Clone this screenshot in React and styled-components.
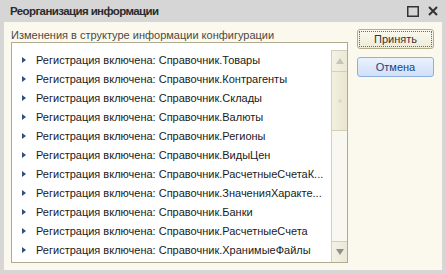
import React from 'react'
import styled, { createGlobalStyle } from 'styled-components'

const GlobalStyle = createGlobalStyle`
  html, body { margin: 0; padding: 0; }
  body {
    background: #d6d6d6;
    font-family: "Liberation Sans", Arial, sans-serif;
  }
`

const Window = styled.div`
  width: 446px;
  height: 274px;
  box-sizing: border-box;
  background: #d6d6d6;
  display: flex;
  flex-direction: column;
  padding: 0 4px 4px 4px;
`

const TitleBar = styled.div`
  height: 22px;
  display: flex;
  align-items: center;
  padding-left: 6px;
  font-size: 11.5px;
  letter-spacing: -0.6px;
  font-weight: bold;
  color: #2b2b2b;
`

const Title = styled.div`
  flex: 1;
`

const TitleButtons = styled.div`
  display: flex;
  align-items: center;
  gap: 9px;
  padding-right: 4px;
  svg { display: block; }
`

const Body = styled.div`
  flex: 1;
  background: #fbf9ee;
  display: flex;
  padding: 7px 8px 7px 7px;
  box-sizing: border-box;
`

const LeftColumn = styled.div`
  flex: 1;
  display: flex;
  flex-direction: column;
  min-width: 0;
`

const Caption = styled.div`
  font-size: 11px;
  line-height: 13px;
  color: #4a4a44;
  white-space: nowrap;
`

const List = styled.div`
  flex: 1;
  background: #fff;
  border: 1px solid #aeab90;
  display: flex;
  flex-direction: column;
  min-height: 0;
`

const ListHeader = styled.div`
  height: 7px;
`

const ListContent = styled.div`
  flex: 1;
  display: flex;
  min-height: 0;
`

const Rows = styled.div`
  flex: 1;
  min-width: 0;
  display: flex;
  flex-direction: column;
`

const Row = styled.div`
  height: 19px;
  display: flex;
  align-items: center;
  padding-left: 10px;
  font-size: 11px;
  color: #1a1a1a;
  white-space: nowrap;
  overflow: hidden;
`

const Expander = styled.span`
  width: 0;
  height: 0;
  border-top: 3.5px solid transparent;
  border-bottom: 3.5px solid transparent;
  border-left: 4px solid #2f4f7f;
  margin-right: 10px;
  flex: none;
`

const Scrollbar = styled.div`
  width: 15px;
  border-left: 1px solid #d3d0b8;
  border-top: 1px solid #d3d0b8;
  background: #f8f7f0;
  display: flex;
  flex-direction: column;
`

const ScrollButton = styled.div`
  height: 20px;
  display: flex;
  align-items: center;
  justify-content: center;
  background: linear-gradient(to right, #f4f2e4, #ebe8d6);
  border-top: ${p => (p.$down ? '1px solid #d3d0b8' : 'none')};
  border-bottom: ${p => (p.$down ? 'none' : '1px solid #d3d0b8')};
`

const Arrow = styled.span`
  width: 0;
  height: 0;
  border-left: 4px solid transparent;
  border-right: 4px solid transparent;
  ${p =>
    p.$down
      ? 'border-top: 6px solid #8f8f8f;'
      : 'border-bottom: 6px solid #c6c4b4;'}
`

const Thumb = styled.div`
  height: 58px;
  display: flex;
  align-items: center;
  justify-content: center;
  background: linear-gradient(to right, #f3f0df, #e9e5cf);
  border-bottom: 1px solid #d3d0b8;
`

const Grip = styled.span`
  width: 4px;
  height: 4px;
  border-radius: 50%;
  background: #dedbc8;
`

const Track = styled.div`
  flex: 1;
`

const ButtonColumn = styled.div`
  width: 77px;
  margin-left: 9px;
  display: flex;
  flex-direction: column;
  gap: 8px;
`

const Button = styled.button`
  height: 20px;
  box-sizing: border-box;
  padding: 0;
  font-family: "Liberation Sans", Arial, sans-serif;
  font-size: 11px;
  color: ${p => (p.$primary ? '#333' : '#1f3f78')};
  border-radius: 3px;
  border: 1px solid ${p => (p.$primary ? '#b3ae8c' : '#8fb0dc')};
  background: ${p =>
    p.$primary
      ? 'linear-gradient(#fbf9ef, #efebd8)'
      : 'linear-gradient(#eaf2fd, #cfe0f8)'};
  outline: ${p => (p.$primary ? '1px dotted #6d6a55' : 'none')};
  outline-offset: -3px;
`

const rows = [
  'Товары',
  'Контрагенты',
  'Склады',
  'Валюты',
  'Регионы',
  'ВидыЦен',
  'РасчетныеСчетаК...',
  'ЗначенияХаракте...',
  'Банки',
  'РасчетныеСчета',
  'ХранимыеФайлы',
]

export default function App() {
  return (
    <>
      <GlobalStyle />
      <Window>
        <TitleBar>
          <Title>Реорганизация информации</Title>
          <TitleButtons>
            <svg width="12" height="11" viewBox="0 0 12 11">
              <rect x="0.75" y="0.75" width="10.5" height="9.5" fill="none" stroke="#333" strokeWidth="1.5" />
            </svg>
            <svg width="10" height="10" viewBox="0 0 10 10">
              <path d="M1 1L9 9M9 1L1 9" stroke="#333" strokeWidth="2" />
            </svg>
          </TitleButtons>
        </TitleBar>
        <Body>
          <LeftColumn>
            <Caption>Изменения в структуре информации конфигурации</Caption>
            <List>
              <ListHeader />
              <ListContent>
                <Rows>
                  {rows.map(name => (
                    <Row key={name}>
                      <Expander />
                      Регистрация включена: Справочник.{name}
                    </Row>
                  ))}
                </Rows>
                <Scrollbar>
                  <ScrollButton>
                    <Arrow />
                  </ScrollButton>
                  <Thumb>
                    <Grip />
                  </Thumb>
                  <Track />
                  <ScrollButton $down>
                    <Arrow $down />
                  </ScrollButton>
                </Scrollbar>
              </ListContent>
            </List>
          </LeftColumn>
          <ButtonColumn>
            <Button $primary>Принять</Button>
            <Button>Отмена</Button>
          </ButtonColumn>
        </Body>
      </Window>
    </>
  )
}
